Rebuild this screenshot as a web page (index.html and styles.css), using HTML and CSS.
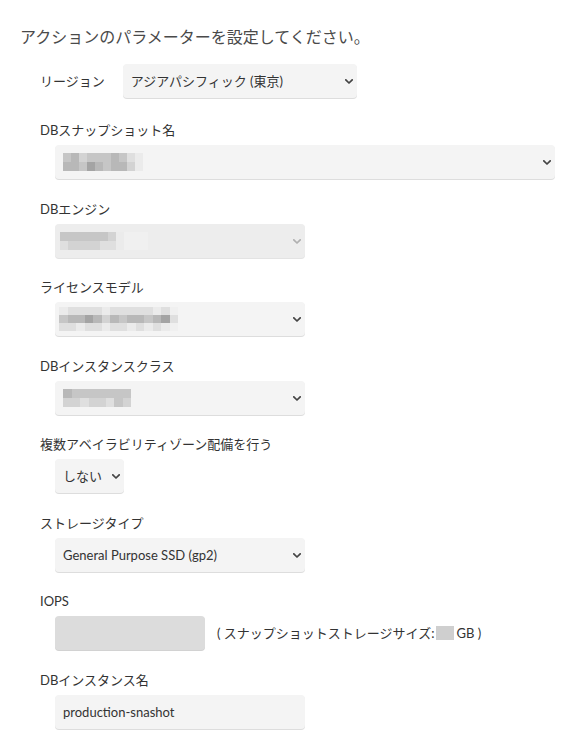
FILE: index.html
```html
<!DOCTYPE html>
<html lang="ja">
<head>
<meta charset="utf-8">
<title>アクションのパラメーター</title>
<link rel="stylesheet" href="styles.css">
</head>
<body>
<div class="page">
  <p class="title">アクションのパラメーターを設定してください。</p>

  <div class="region-row">
    <label class="inline-label">リージョン</label>
    <div class="sel w234">
      <select><option>アジアパシフィック (東京)</option></select>
      <svg class="chev" viewBox="0 0 8 5" width="8" height="5"><path d="M0.8 0.8L4 4L7.2 0.8"/></svg>
    </div>
  </div>

  <div class="fields">
    <div class="field">
      <label class="label">DBスナップショット名</label>
      <div class="sel w500 control">
        <select><option></option></select>
        <span class="blur cols10">
          <i class="s3"></i><i class="s2"></i><i class="s4"></i><i class="s3"></i><i class="s3"></i><i class="s3"></i><i class="s2"></i><i class="s3"></i><i class="s5"></i><i class="s6"></i>
          <i class="s2"></i><i class="s2"></i><i class="s3"></i><i class="s1"></i><i class="s2"></i><i class="s3"></i><i class="s2"></i><i class="s2"></i><i class="s4"></i><i class="s6"></i>
        </span>
        <svg class="chev" viewBox="0 0 8 5" width="8" height="5"><path d="M0.8 0.8L4 4L7.2 0.8"/></svg>
      </div>
    </div>

    <div class="field">
      <label class="label">DBエンジン</label>
      <div class="sel w250 control disabled">
        <select disabled><option></option></select>
        <span class="blur cols11">
          <i class="s3"></i><i class="s3"></i><i class="s3"></i><i class="s3"></i><i class="s3"></i><i class="s3"></i><i class="s4"></i><i class="s6"></i><i class="s7"></i><i class="s7"></i><i class="s7"></i>
          <i class="s5"></i><i class="s4"></i><i class="s4"></i><i class="s4"></i><i class="s4"></i><i class="s5"></i><i class="s5"></i><i class="s6"></i><i class="s7"></i><i class="s7"></i><i class="s7"></i>
        </span>
        <svg class="chev" viewBox="0 0 8 5" width="8" height="5"><path d="M0.8 0.8L4 4L7.2 0.8"/></svg>
      </div>
    </div>

    <div class="field">
      <label class="label">ライセンスモデル</label>
      <div class="sel w250 control">
        <select><option></option></select>
        <span class="blur cols14 tall">
          <i class="s6"></i><i class="s5"></i><i class="s5"></i><i class="s5"></i><i class="s5"></i><i class="s6"></i><i class="s5"></i><i class="s5"></i><i class="s5"></i><i class="s5"></i><i class="s5"></i><i class="s6"></i><i class="s5"></i><i class="s7"></i>
          <i class="s3"></i><i class="s2"></i><i class="s2"></i><i class="s1"></i><i class="s2"></i><i class="s4"></i><i class="s2"></i><i class="s3"></i><i class="s2"></i><i class="s2"></i><i class="s3"></i><i class="s2"></i><i class="s1"></i><i class="s5"></i>
          <i class="s5"></i><i class="s5"></i><i class="s6"></i><i class="s5"></i><i class="s5"></i><i class="s6"></i><i class="s5"></i><i class="s5"></i><i class="s6"></i><i class="s5"></i><i class="s6"></i><i class="s5"></i><i class="s6"></i><i class="s7"></i>
        </span>
        <svg class="chev" viewBox="0 0 8 5" width="8" height="5"><path d="M0.8 0.8L4 4L7.2 0.8"/></svg>
      </div>
    </div>

    <div class="field">
      <label class="label">DBインスタンスクラス</label>
      <div class="sel w250 control">
        <select><option></option></select>
        <span class="blur cols8">
          <i class="s2"></i><i class="s3"></i><i class="s3"></i><i class="s3"></i><i class="s3"></i><i class="s3"></i><i class="s3"></i><i class="s3"></i>
          <i class="s4"></i><i class="s4"></i><i class="s5"></i><i class="s4"></i><i class="s4"></i><i class="s5"></i><i class="s3"></i><i class="s4"></i>
        </span>
        <svg class="chev" viewBox="0 0 8 5" width="8" height="5"><path d="M0.8 0.8L4 4L7.2 0.8"/></svg>
      </div>
    </div>

    <div class="field">
      <label class="label">複数アベイラビリティゾーン配備を行う</label>
      <div class="sel w69 control">
        <select><option>しない</option></select>
        <svg class="chev" viewBox="0 0 8 5" width="8" height="5"><path d="M0.8 0.8L4 4L7.2 0.8"/></svg>
      </div>
    </div>

    <div class="field">
      <label class="label">ストレージタイプ</label>
      <div class="sel w250 control">
        <select><option>General Purpose SSD (gp2)</option></select>
        <svg class="chev" viewBox="0 0 8 5" width="8" height="5"><path d="M0.8 0.8L4 4L7.2 0.8"/></svg>
      </div>
    </div>

    <div class="field">
      <label class="label">IOPS</label>
      <div class="iops-row control">
        <input class="text-input w150" type="text" disabled>
        <span class="hint">( スナップショットストレージサイズ:<span class="gb-blur"></span>GB )</span>
      </div>
    </div>

    <div class="field">
      <label class="label">DBインスタンス名</label>
      <div class="control">
        <input class="text-input w250 enabled" type="text" value="production-snashot">
      </div>
    </div>
  </div>
</div>
</body>
</html>
```

FILE: styles.css
```css
* { box-sizing: border-box; }

body {
  margin: 0;
  background: #ffffff;
  font-family: Lato, "Noto Sans CJK JP", sans-serif;
  color: #333333;
}

.page {
  padding: 26px 0 0 20px;
}

.title {
  margin: 0 0 16px;
  font-size: 16px;
  line-height: 22px;
  color: #4a4a4a;
  font-weight: 400;
}

.region-row {
  display: flex;
  align-items: center;
  gap: 18px;
  padding-left: 20px;
  margin-bottom: 22px;
}

.inline-label {
  font-size: 13px;
  line-height: 20px;
}

.fields {
  padding-left: 20px;
}

.field {
  margin-bottom: 19.5px;
}

.label {
  display: block;
  font-size: 13px;
  line-height: 20px;
  margin-bottom: 5px;
}

.control {
  margin-left: 15px;
}

.sel {
  position: relative;
  height: 34px;
}

.w69 { width: 69px; }
.w150 { width: 150px; }
.w234 { width: 234px; }
.w250 { width: 250px; }
.w500 { width: 500px; }

.sel select {
  -webkit-appearance: none;
  appearance: none;
  display: block;
  width: 100%;
  height: 34px;
  margin: 0;
  border: 0;
  border-radius: 4px;
  background: #f4f4f4;
  box-shadow: 0 1px 0 #dddddd;
  font-family: Lato, "Noto Sans CJK JP", sans-serif;
  font-size: 13px;
  color: #333333;
  padding: 0 20px 0 8px;
  outline: none;
}

.sel.disabled select {
  background: #e6e6e6;
  box-shadow: 0 1px 0 #d8d8d8;
}

.chev {
  position: absolute;
  right: 4px;
  top: 15px;
  pointer-events: none;
}

.chev path {
  fill: none;
  stroke: #444444;
  stroke-width: 1.7;
  stroke-linecap: round;
  stroke-linejoin: round;
}

.sel.disabled .chev path {
  stroke: #b0b0b0;
}

.blur {
  position: absolute;
  left: 8px;
  top: 8px;
  display: grid;
  grid-auto-rows: 9px;
  pointer-events: none;
}

.blur.tall {
  top: 5px;
  grid-auto-rows: 8px;
}

.cols8 { grid-template-columns: repeat(8, 8.5px); left: 8px; top: 8px; }
.cols10 { grid-template-columns: repeat(10, 8px); }
.cols11 { grid-template-columns: repeat(11, 8px); left: 5px; }
.cols14 { grid-template-columns: repeat(14, 8.5px); left: 4px; }

.blur i { display: block; }
.s1 { background: #a4a4a4; }
.s2 { background: #b8b8b8; }
.s3 { background: #c6c6c6; }
.s4 { background: #d3d3d3; }
.s5 { background: #dfdfdf; }
.s6 { background: #ebebeb; }
.s7 { background: #f0f0f0; }

.iops-row {
  display: flex;
  align-items: center;
  gap: 12px;
}

.text-input {
  display: block;
  height: 34px;
  margin: 0;
  border: 0;
  border-radius: 4px;
  background: #dcdcdc;
  box-shadow: 0 1px 0 #d2d2d2;
  font-family: Lato, "Noto Sans CJK JP", sans-serif;
  font-size: 13px;
  color: #333333;
  padding: 0 8px;
  outline: none;
}

.text-input.enabled {
  background: #f4f4f4;
  box-shadow: 0 1px 0 #dddddd;
}

.hint {
  font-size: 13px;
  line-height: 20px;
  color: #333333;
  display: inline-flex;
  align-items: center;
  white-space: nowrap;
}

.gb-blur {
  display: inline-block;
  width: 18px;
  height: 14px;
  margin: 0 2px 0 2px;
  background: #cfcfcf;
}
```
